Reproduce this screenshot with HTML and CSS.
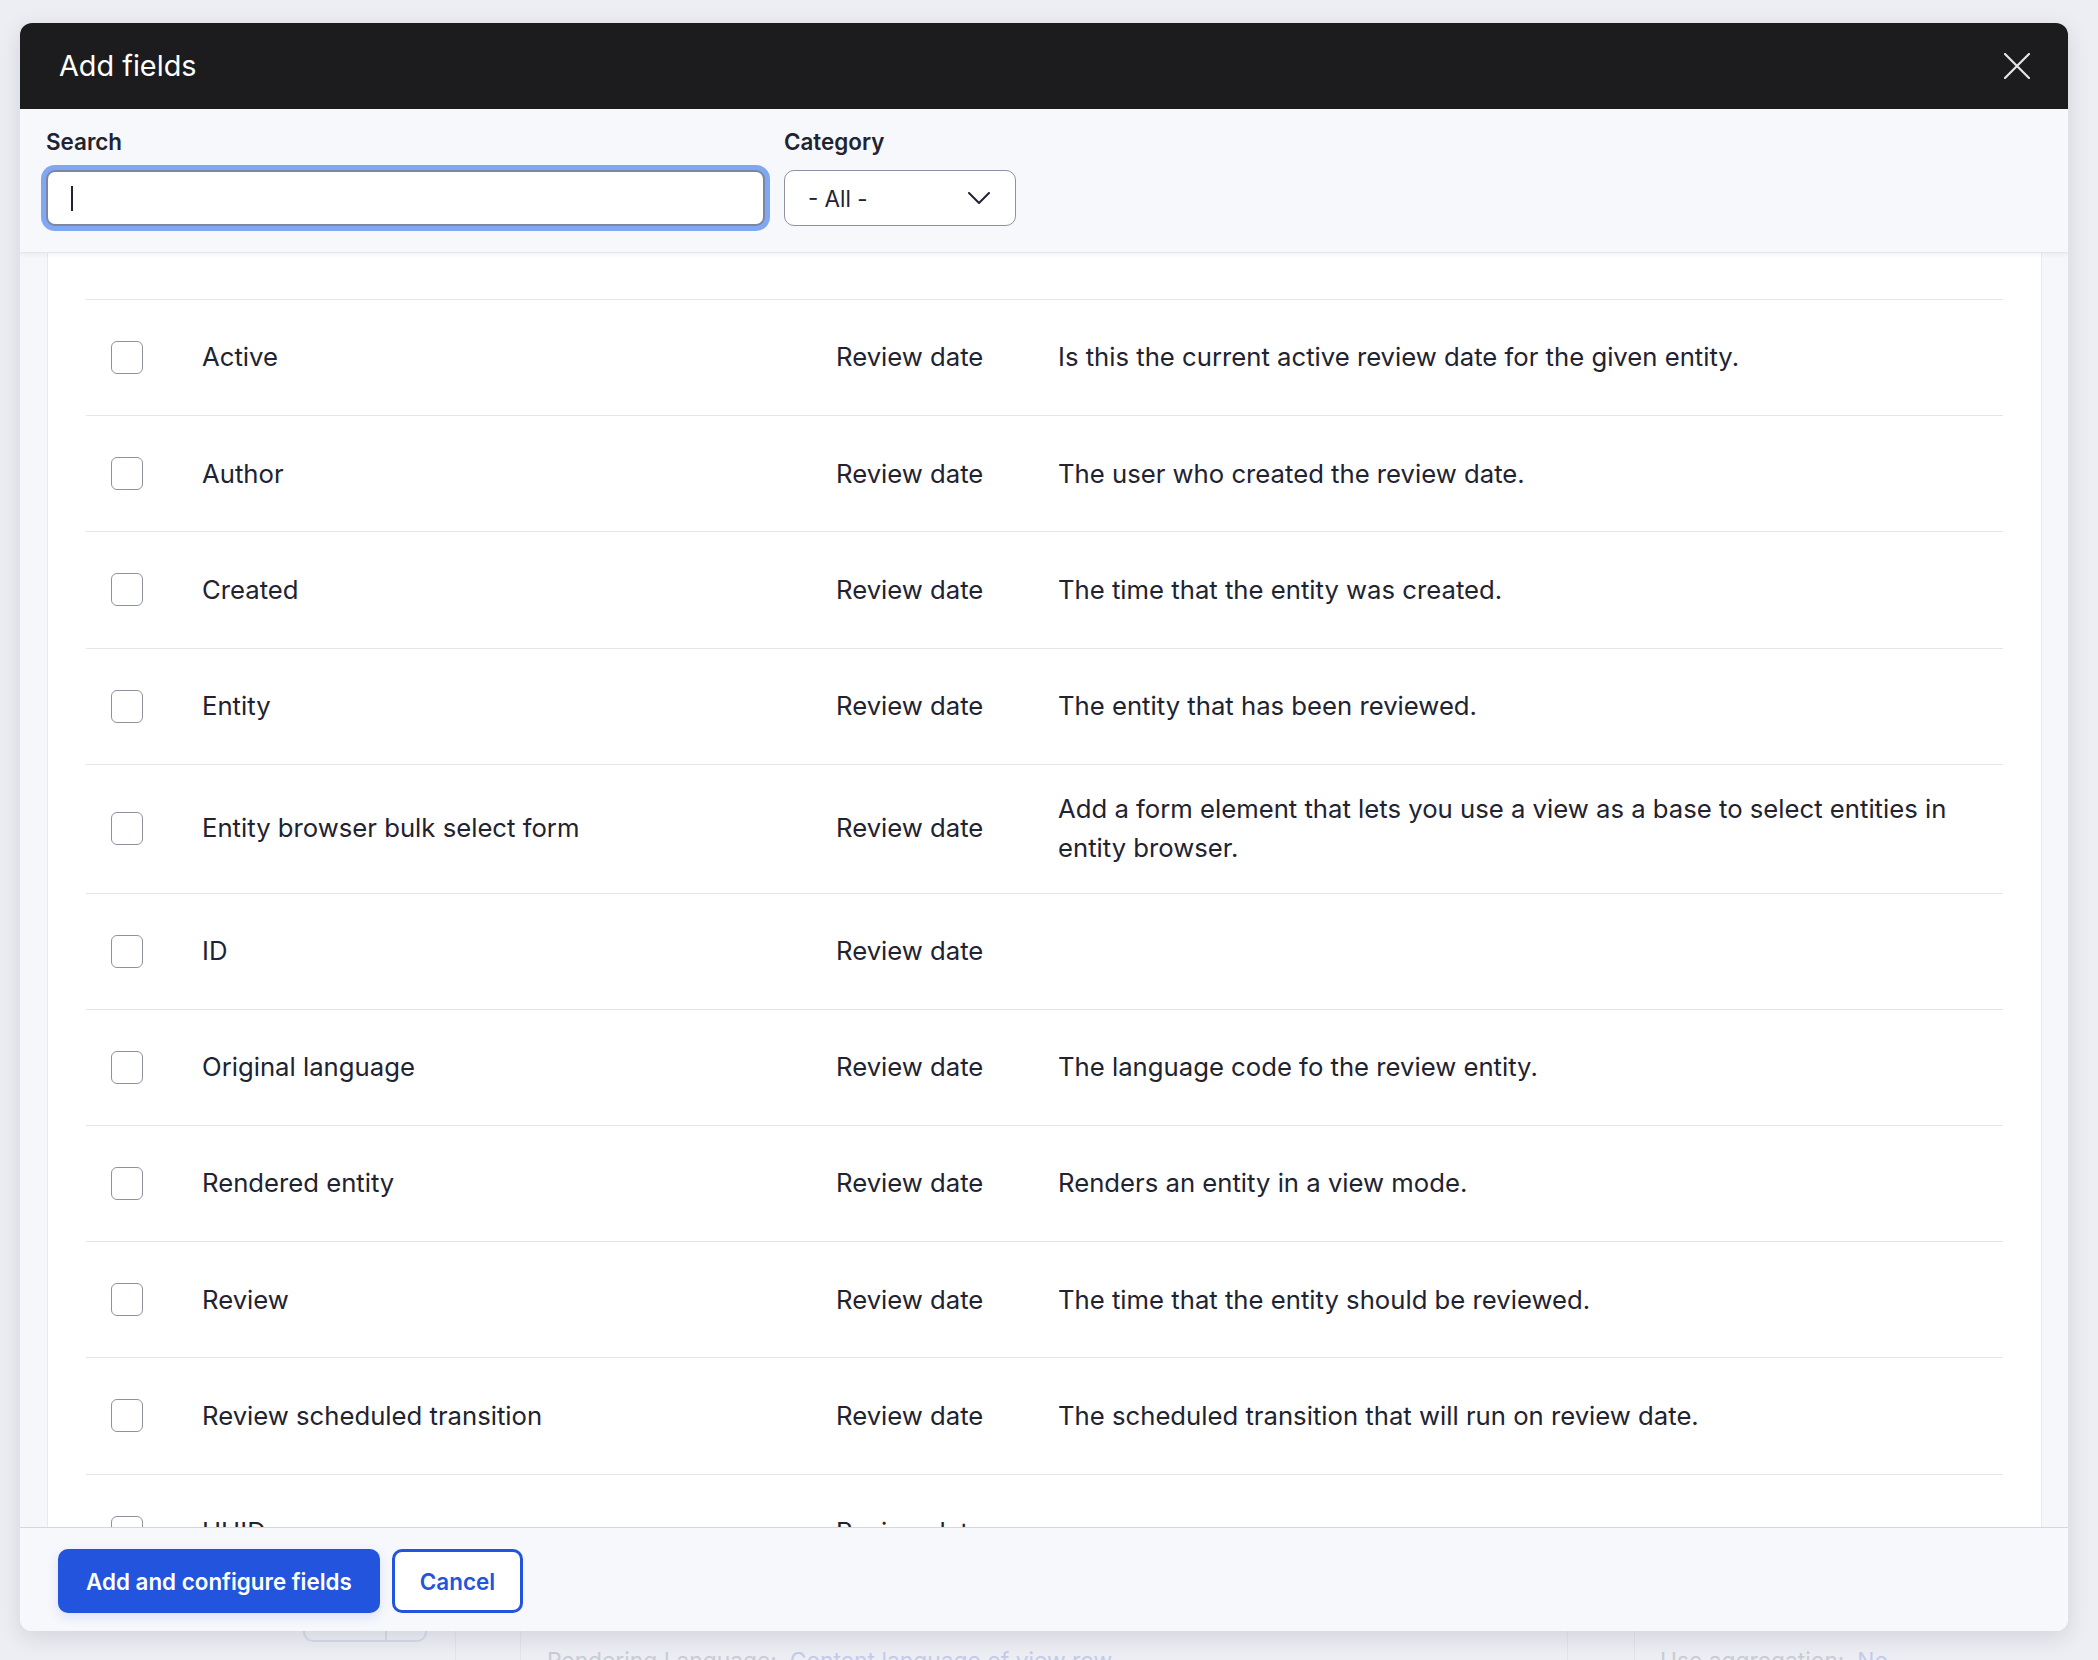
FILE: index.html
```html
<!DOCTYPE html>
<html lang="en">
<head>
<meta charset="utf-8">
<title>Add fields</title>
<link rel="stylesheet" href="styles.css">
</head>
<body>
<div class="under">
  <div class="under-row">
    <div class="under-btn"><span class="under-btn-split"></span></div>
    <div class="under-line"></div>
    <div class="under-line second"></div>
    <div class="under-text lang">Rendering Language:&nbsp; <span class="under-link">Content language of view row</span></div>
    <div class="under-line third"></div>
    <div class="under-line fourth"></div>
    <div class="under-text agg">Use aggregation:&nbsp; <span class="under-link">No</span></div>
  </div>
</div>

<div class="modal" role="dialog" aria-labelledby="dlg-title">
  <header class="modal-header">
    <h1 id="dlg-title" class="modal-title">Add fields</h1>
    <button class="close-btn" aria-label="Close">
      <svg width="26" height="26" viewBox="0 0 26 26" aria-hidden="true"><path d="M1 1 L25 25 M25 1 L1 25" stroke="#e6e6e6" stroke-width="2.2" fill="none" stroke-linecap="round"/></svg>
    </button>
  </header>

  <div class="filters">
    <div class="filter-item">
      <label class="filter-label">Search</label>
      <div class="search-input"><span class="caret"></span></div>
    </div>
    <div class="filter-item">
      <label class="filter-label">Category</label>
      <div class="select">
        <span>- All -</span>
        <svg width="22" height="12" viewBox="0 0 22 12" aria-hidden="true"><path d="M1 1 L11 11 L21 1" stroke="#222330" stroke-width="2" fill="none" stroke-linecap="round" stroke-linejoin="round"/></svg>
      </div>
    </div>
  </div>

  <div class="modal-body">
    <div class="card">
      <div class="rows">
        <div class="row"><span class="cb"></span><span class="name">Active</span><span class="cat">Review date</span><span class="desc">Is this the current active review date for the given entity.</span></div>
        <div class="row"><span class="cb"></span><span class="name">Author</span><span class="cat">Review date</span><span class="desc">The user who created the review date.</span></div>
        <div class="row"><span class="cb"></span><span class="name">Created</span><span class="cat">Review date</span><span class="desc">The time that the entity was created.</span></div>
        <div class="row"><span class="cb"></span><span class="name">Entity</span><span class="cat">Review date</span><span class="desc">The entity that has been reviewed.</span></div>
        <div class="row"><span class="cb"></span><span class="name">Entity browser bulk select form</span><span class="cat">Review date</span><span class="desc">Add a form element that lets you use a view as a base to select entities in entity browser.</span></div>
        <div class="row"><span class="cb"></span><span class="name">ID</span><span class="cat">Review date</span><span class="desc"></span></div>
        <div class="row"><span class="cb"></span><span class="name">Original language</span><span class="cat">Review date</span><span class="desc">The language code fo the review entity.</span></div>
        <div class="row"><span class="cb"></span><span class="name">Rendered entity</span><span class="cat">Review date</span><span class="desc">Renders an entity in a view mode.</span></div>
        <div class="row"><span class="cb"></span><span class="name">Review</span><span class="cat">Review date</span><span class="desc">The time that the entity should be reviewed.</span></div>
        <div class="row"><span class="cb"></span><span class="name">Review scheduled transition</span><span class="cat">Review date</span><span class="desc">The scheduled transition that will run on review date.</span></div>
        <div class="row"><span class="cb"></span><span class="name">UUID</span><span class="cat">Review date</span><span class="desc"></span></div>
      </div>
    </div>
  </div>

  <footer class="modal-footer">
    <button class="btn btn-primary">Add and configure fields</button>
    <button class="btn btn-secondary">Cancel</button>
  </footer>
</div>
</body>
</html>
```
FILE: styles.css
```css
* { box-sizing: border-box; }
html, body { margin: 0; padding: 0; }
body {
  width: 2098px;
  height: 1660px;
  overflow: hidden;
  background: #eceef3;
  font-family: Inter, "Noto Sans", "Liberation Sans", sans-serif;
  color: #222330;
  position: relative;
}

/* underlying page (mostly covered by the dialog) */
.under { padding-top: 1598px; }
.under-row {
  display: flex;
  align-items: flex-start;
  height: 62px;
  position: relative;
}
.under-btn {
  margin-left: 303px;
  width: 124px;
  height: 44px;
  border: 2px solid #d6dbea;
  border-radius: 10px;
  display: flex;
  justify-content: flex-end;
}
.under-btn-split { width: 40px; border-left: 2px solid #d6dbea; }
.under-line { width: 1px; height: 62px; background: #e2e4ea; margin-left: 28px; }
.under-line.second { margin-left: 64px; }
.under-line.third { margin-left: 0; }
.under-line.fourth { margin-left: 66px; }
.under-text {
  font-size: 22.8px;
  line-height: 34px;
  color: #c9ccd5;
  margin-top: 46px;
  white-space: nowrap;
}
.under-text.lang { margin-left: 26px; width: 1020px; }
.under-text.agg { margin-left: 25px; }
.under-link { color: #c3cbeb; }

/* dialog */
.modal {
  position: absolute;
  left: 20px;
  top: 23px;
  width: 2048px;
  height: 1608px;
  border-radius: 12px;
  overflow: hidden;
  background: #f7f8fc;
  box-shadow: 0 6px 22px rgba(30, 35, 60, 0.13);
  display: flex;
  flex-direction: column;
}
.modal-header {
  height: 86px;
  flex: none;
  background: #1c1c1e;
  display: flex;
  align-items: center;
  justify-content: space-between;
  padding: 0 38px 0 39px;
}
.modal-title {
  margin: 0;
  font-size: 28.8px;
  font-weight: 400;
  color: #ffffff;
  line-height: 40px;
}
.close-btn {
  border: 0;
  background: transparent;
  padding: 0;
  width: 26px;
  height: 26px;
  display: flex;
}

.filters {
  flex: none;
  height: 144px;
  background: #f7f8fc;
  border-bottom: 1px solid #e4e6ec;
  box-shadow: 0 2px 4px rgba(30, 35, 60, 0.05);
  padding: 16px 0 0 26px;
  display: flex;
  gap: 19px;
  position: relative;
  z-index: 2;
}
.filter-item { display: flex; flex-direction: column; gap: 11px; }
.filter-label {
  font-size: 22.4px;
  font-weight: 600;
  line-height: 34px;
  color: #222330;
}
.search-input {
  width: 719px;
  height: 56px;
  background: #fff;
  border: 2px solid #7c86a0;
  border-radius: 9px;
  box-shadow: 0 0 0 5px #80a8f2;
  display: flex;
  align-items: center;
  padding-left: 23px;
}
.caret { width: 2px; height: 25px; background: #222330; }
.select {
  width: 232px;
  height: 56px;
  background: #fff;
  border: 1px solid #8e929c;
  border-radius: 10px;
  display: flex;
  align-items: center;
  justify-content: space-between;
  padding: 0 25px 0 23px;
  font-size: 22.4px;
  color: #222330;
}

.modal-body {
  flex: 1;
  min-height: 0;
  overflow: hidden;
  background: #f6f7fa;
  padding: 0 26px 0 27px;
}
.card {
  background: #ffffff;
  border-left: 1px solid #e8e9ee;
  border-right: 1px solid #e8e9ee;
  padding: 46px 38px 0 38px;
  min-height: 100%;
}
.row {
  display: grid;
  grid-template-columns: 90px 634px 222px 1fr;
  align-items: center;
  min-height: 116.2px;
  border-top: 1px solid #e4e5e9;
  padding: 25.5px 0;
  font-size: 25.7px;
  line-height: 38.4px;
  color: #222330;
}
.cb {
  width: 32px;
  height: 33px;
  border: 1px solid #8e929c;
  border-radius: 6px;
  background: #fff;
  margin-left: 25px;
}
.name { padding-left: 26px; }
.cat { padding-left: 26px; white-space: nowrap; }
.desc { padding-left: 26px; padding-right: 30px; }

.modal-footer {
  flex: none;
  height: 104px;
  border-top: 1px solid #d5d7dd;
  background: #f7f8fc;
  display: flex;
  align-items: flex-start;
  gap: 12px;
  padding: 21px 0 0 38px;
}
.btn {
  font-family: Inter, "Noto Sans", "Liberation Sans", sans-serif;
  font-size: 22.4px;
  font-weight: 600;
  height: 64px;
  border-radius: 10px;
  cursor: pointer;
}
.btn-primary {
  background: #2254de;
  color: #fff;
  border: 0;
  padding: 0 28px;
  box-shadow: 0 4px 12px rgba(34, 84, 222, 0.14);
}
.btn-secondary {
  background: #fff;
  color: #2254de;
  border: 3px solid #2254de;
  padding: 0 25px;
}
```
